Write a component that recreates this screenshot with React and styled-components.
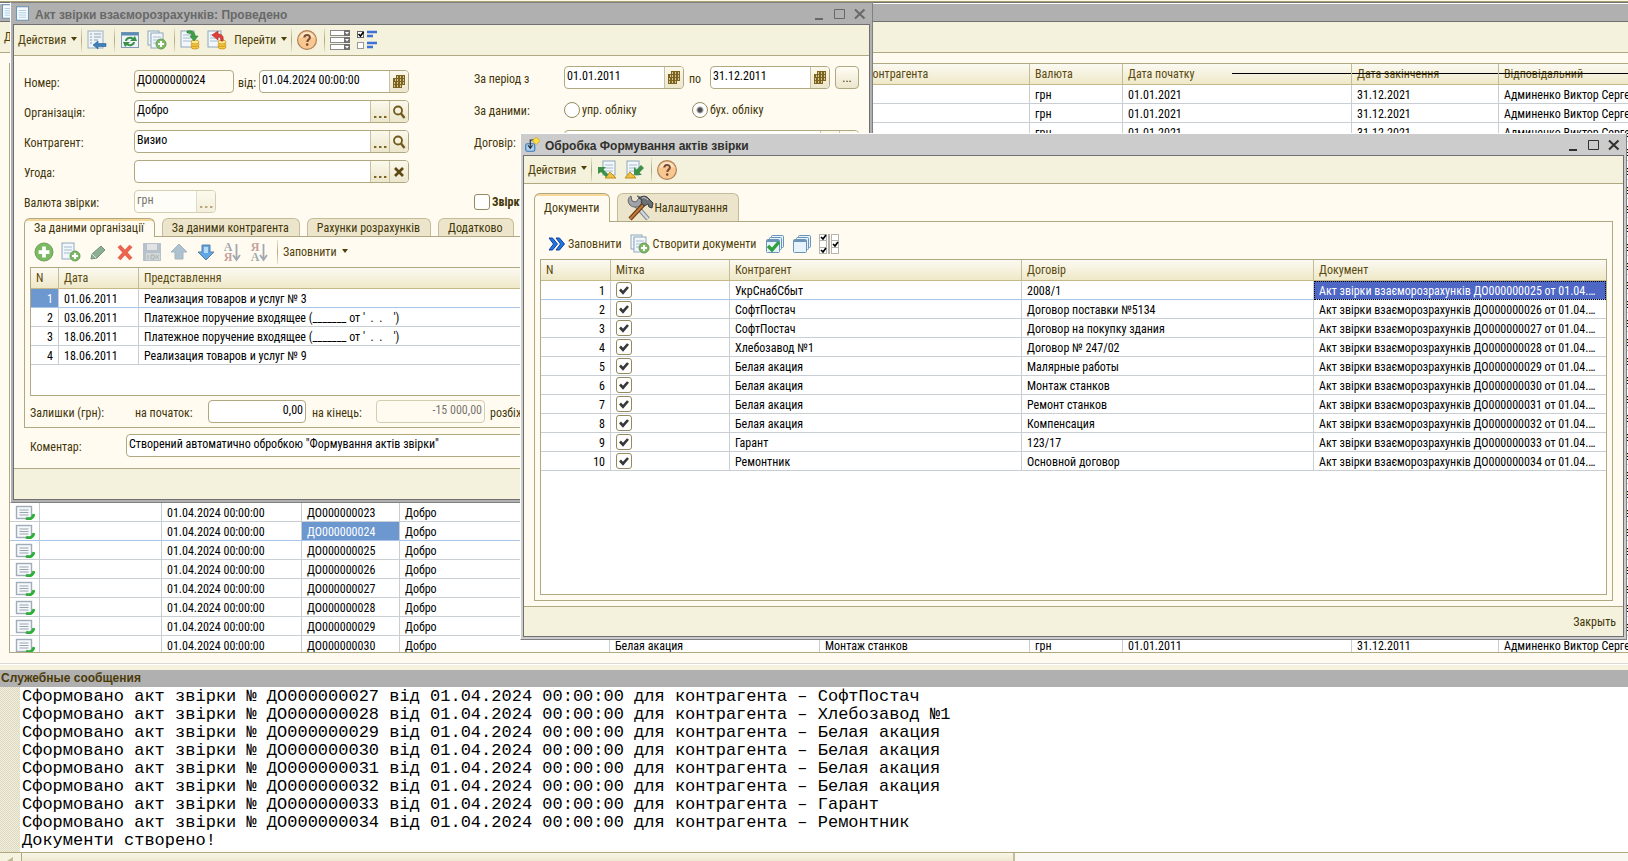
import React from "react";
import styled, { createGlobalStyle, css } from "styled-components";

const GlobalStyle = createGlobalStyle`
  * {
    box-sizing: border-box;
  }

  body {
    margin: 0;
    overflow: hidden;
    background: #fffbf0;
  }

  body, button, input, table {
    font-family: "Roboto Condensed", "Liberation Sans", sans-serif;
    font-size: 12px;
    color: #3f3508;
  }

  button {
    padding: 0;
    border: none;
    background: none;
    cursor: pointer;
  }

  svg {
    display: block;
    flex: none;
  }
`;

/* ---------- page ---------- */

const Page = styled.div`
  height: 100vh;
  display: flex;
  flex-direction: column;
`;

const Desktop = styled.main`
  position: relative;
  flex: 1;
  min-height: 0;
  display: flex;
  flex-direction: column;
  overflow: hidden;
  border-top: 1px solid #fbf9e8;
`;

const ListTitle = styled.div`
  flex: none;
  height: 21px;
  padding-left: 1px;
  border-top: 1px solid #a8a070;
  border-bottom: 1px solid #707070;
  background: linear-gradient(#707070 1px, #fff 1px, #fff 2px, #b0b0b0 2px);
  display: flex;
  align-items: center;
`;

const ListBox = styled.div`
  flex: 1;
  min-height: 0;
  margin: 10px 0 10px 9px;
  border: 1px solid #b0a880;
  border-right: none;
  background: #fff;
  overflow: hidden;
`;

/* ---------- toolbars ---------- */

const Toolbar = styled.div`
  flex: none;
  height: ${(p) => p.$height || 31}px;
  display: flex;
  align-items: center;
  ${(p) =>
    !p.$plain &&
    css`
      background: #f4f1dc;
      border-bottom: 1px solid #b0a880;
    `}
`;

const Separator = styled.span`
  width: 1px;
  height: 24px;
  margin: 0 1px 0 4px;
  background: linear-gradient(#e8e4cc, #b0a880, #e8e4cc);
`;

const MenuButton = styled.button`
  height: 24px;
  padding-left: 4px;
  display: flex;
  align-items: center;
  gap: 5px;
  color: #4f3f08;
  white-space: nowrap;

  &::after {
    content: "";
    margin-bottom: 3px;
    border: 3px solid transparent;
    border-top: 4px solid #4f3f08;
    border-bottom: none;
  }
`;

const IconButton = styled.button`
  width: 27px;
  height: 24px;
  display: flex;
  align-items: center;
  justify-content: center;
  opacity: ${(p) => (p.$faded ? 0.5 : 1)};
`;

const TextButton = styled.button`
  height: 24px;
  padding: 0 0 0 8px;
  display: flex;
  align-items: center;
  gap: 3px;
  color: #4f3f08;
  white-space: nowrap;
`;

const FillToolbar = styled(Toolbar)`
  padding-top: 6px;
`;

const FlagButtons = styled.div`
  margin-left: 5px;
  display: flex;
`;

/* ---------- windows ---------- */

const Window = styled.section`
  position: absolute;
  display: flex;
  flex-direction: column;
  padding: 0 2px 2px;
  border: 1px solid #808080;
  border-left-color: #fff;
  background: ${(p) => (p.$active ? "#cccccc" : "#b0b0b0")};
  color: ${(p) => (p.$active ? "#30302c" : "#686868")};
`;

const ActWindow = styled(Window)`
  left: 10px;
  top: 1px;
  width: 863px;
`;

const ProcessingWindow = styled(Window)`
  left: 520px;
  right: 1px;
  top: 132px;
  border-top-color: #fff;
`;

const TitleBar = styled.header`
  height: 21px;
  padding-left: 2px;
  display: flex;
  align-items: center;
  gap: 5px;
`;

const Title = styled.h1`
  flex: 1;
  margin: 2px 0 0;
  font: bold 12px "Liberation Sans", sans-serif;
  color: inherit;
`;

const ControlsRow = styled.div`
  display: flex;
`;

const WindowButton = styled.button`
  width: 20px;
  height: 20px;
  display: flex;
  align-items: center;
  justify-content: center;
  color: inherit;
`;

const Client = styled.div`
  border: 1px solid #707070;
  background: #fffbf0;
  color: #3f3508;
`;

const ActBody = styled.div`
  padding: 10px 10px 11px;
`;

const ProcessingBody = styled.div`
  padding: 9px 10px 5px;
`;

const Footer = styled.footer`
  height: ${(p) => p.$height}px;
  padding: 0 7px;
  border-top: 1px solid #b0a880;
  background: #f4f1dc;
  display: flex;
  align-items: center;
  justify-content: flex-end;
`;

/* ---------- form ---------- */

const FormGrid = styled.div`
  display: grid;
  grid-template-columns: 450px 1fr;
`;

const LeftColumn = styled.div`
  padding-top: 4px;
  display: flex;
  flex-direction: column;
  gap: 7px;
`;

const RightColumn = styled.div`
  display: flex;
  flex-direction: column;
  gap: 9px;
`;

const Line = styled.div`
  width: ${(p) => p.$width || "auto"};
  height: ${(p) => p.$height || 23}px;
  display: flex;
  align-items: center;
`;

const CommentLine = styled(Line)`
  margin-top: 6px;
  padding-left: 6px;
`;

const Label = styled.label`
  flex: none;
  width: ${(p) => p.$width}px;
  padding: 2px 0 0 ${(p) => p.$indent || 0}px;
  white-space: nowrap;
`;

const Field = styled.div`
  flex: ${(p) => (p.$width ? "none" : 1)};
  width: ${(p) => p.$width || 0}px;
  height: 23px;
  display: flex;
  overflow: hidden;
  border: 1px solid #b0a880;
  border-radius: 4px;
  background: ${(p) => (p.$muted ? "#fffbf0" : "#fff")};
  opacity: ${(p) => (p.$disabled ? 0.55 : 1)};

  input {
    flex: 1;
    min-width: 0;
    padding: 0 2px 4px;
    border: none;
    outline: none;
    background: none;
    color: #000;
    text-align: ${(p) => p.$align || "left"};
  }
`;

const FieldButton = styled.button`
  width: 19px;
  border-left: 1px solid #c8c2a0;
  background: linear-gradient(#fbf9ec, #ece6cc);
  display: flex;
  align-items: center;
  justify-content: center;
`;

const PeriodButton = styled.button`
  width: 24px;
  height: 23px;
  margin-left: 5px;
  border: 1px solid #b0a880;
  border-radius: 4px;
  background: linear-gradient(#fffdf4, #ece6cc);
`;

const Choice = styled.label`
  width: 128px;
  display: flex;
  align-items: center;
  gap: 2px;
`;

const BoldChoice = styled.label`
  height: 24px;
  margin-top: 28px;
  display: flex;
  align-items: center;
  gap: 2px;
  font-weight: bold;
`;

const Radio = styled.input`
  appearance: none;
  width: 16px;
  height: 16px;
  margin: 0;
  border: 1px solid #948a60;
  border-radius: 50%;
  background: #fff;

  &:checked {
    background: radial-gradient(#444 0, #555 2px, #fff 4px);
  }
`;

const tick =
  "url(\"data:image/svg+xml,%3Csvg xmlns='http://www.w3.org/2000/svg' viewBox='0 0 14 14'%3E%3Cpath d='M3 6.5l3 3.2L11 4' fill='none' stroke='%23383838' stroke-width='2.6'/%3E%3C/svg%3E\")";

const Checkbox = styled.input`
  appearance: none;
  flex: none;
  display: block;
  width: 16px;
  height: 16px;
  margin: 0;
  border: 1px solid #948a60;
  border-radius: 3px;
  background: #fff;

  &:checked {
    background: #fff ${tick};
  }
`;

/* ---------- tabs ---------- */

const Tabs = styled.div`
  display: flex;
  gap: 7px;
  margin-top: ${(p) => p.$offset || 0}px;
`;

const Tab = styled.button`
  position: relative;
  height: ${(p) => p.$height}px;
  padding: 0 10px 0 9px;
  display: flex;
  align-items: center;
  border: 1px solid #c4bc98;
  border-bottom: none;
  border-radius: 6px 6px 0 0;
  background: #ece5cb;
  white-space: nowrap;

  ${(p) =>
    p.$selected &&
    css`
      margin-bottom: -1px;
      border-color: #b0a880;
      background: linear-gradient(#f8d898 2px, #fffbf0 2px);
    `}
`;

const Panel = styled.div`
  padding: 0 5px ${(p) => p.$bottom || 0}px;
  border: 1px solid #b0a880;
`;

/* ---------- tables ---------- */

const TableBox = styled.div`
  min-height: ${(p) => p.$height}px;
  border: 1px solid #b0a880;
  background: #fff;
`;

const Table = styled.table`
  width: 100%;
  table-layout: fixed;
  border-collapse: separate;
  border-spacing: 0;
`;

const Th = styled.th`
  position: relative;
  height: 21px;
  padding: 0 5px;
  border-right: 1px solid #c4bc98;
  border-bottom: 1px solid #c4b888;
  background: linear-gradient(#fbfaf2, #efe8c8);
  color: #5a4a10;
  font-weight: normal;
  text-align: left;
  white-space: nowrap;
  overflow: hidden;

  &:last-child {
    border-right: none;
  }

  ${(p) =>
    p.$strike !== undefined &&
    css`
      &::after {
        content: "";
        position: absolute;
        left: ${p.$strike}px;
        right: -1px;
        top: 9px;
        height: 1px;
        background: #000;
      }
    `}
`;

const Tr = styled.tr`
  td {
    border-bottom-color: ${(p) => (p.$current ? "#a8c4e8" : "#c8ced2")};
  }
`;

const Td = styled.td`
  height: 19px;
  padding: ${(p) => (p.$graphic ? 0 : 2)}px 5px 0;
  border-right: 1px solid #c8ced2;
  border-bottom: 1px solid #c8ced2;
  color: #000;
  line-height: 16px;
  text-align: ${(p) => p.$align || "left"};
  white-space: ${(p) => (p.$pre ? "pre" : "nowrap")};
  overflow: hidden;

  &:last-child {
    border-right: none;
  }

  ${(p) =>
    p.$selected &&
    css`
      background: #6d97cf;
      color: #fff;
    `}

  ${(p) =>
    p.$focused &&
    css`
      background: #4f67c4;
      color: #fff;
      outline: 1px dotted #000;
      outline-offset: -1px;
    `}
`;

/* ---------- messages ---------- */

const Messages = styled.section`
  flex: none;
  border-top: 1px solid #d8d8d8;
  background: linear-gradient(#fff 1px, #f4f1dc 1px);
  padding-top: 6px;
`;

const MessagesTitle = styled.h2`
  height: 17px;
  margin: 0;
  padding-left: 1px;
  background: #b0b0b0;
  color: #4a3a08;
  font: bold 12px/17px "Liberation Sans", sans-serif;
`;

const LogArea = styled.div`
  padding-left: 20px;
  background: repeating-conic-gradient(#dcd8bc 0 25%, #f2efe0 0 50%) 0 0 / 2px 2px;
`;

const Log = styled.div`
  height: 165px;
  padding: 1px 0 0 2px;
  background: #fff;
  color: #000;
  font: 17px/18px "Liberation Mono", monospace;
  white-space: pre;
  overflow: hidden;
`;

const ScrollBar = styled.div`
  height: 9px;
  display: flex;
  border-top: 1px solid #b0a880;
  background: #faf8f2;
  overflow: hidden;
`;

const ScrollArrow = styled.span`
  width: 22px;
  border-right: 1px solid #b0a880;
  background: #f6f2e0;
  display: flex;
  align-items: flex-end;
  justify-content: center;
`;

const ScrollThumb = styled.span`
  width: 61%;
  border-right: 2px solid #c4bc98;
  background: linear-gradient(#f8f6ea, #f0e9d0);
`;

/* ---------- icons ---------- */

const Svg = ({ size = 20, children }) => (
  <svg width={size} height={size} viewBox="0 0 20 20" aria-hidden="true">
    {children}
  </svg>
);

const Sheet = ({ x = 1, y = 1, w = 13, h = 16 }) => (
  <g>
    <rect x={x} y={y} width={w} height={h} fill="#f2f7fb" stroke="#8fa8bc" />
    <path
      d={`M${x + 2} ${y + 4}h${w - 4}M${x + 2} ${y + 7}h${w - 4}M${x + 2} ${y + 10}h${w - 4}`}
      stroke="#a4bccd"
    />
  </g>
);

const Coins = () => (
  <g fill="#f6c840" stroke="#c08a18" strokeWidth=".7">
    <ellipse cx="15" cy="17" rx="4" ry="2" />
    <ellipse cx="15" cy="14.5" rx="4" ry="2" />
    <ellipse cx="15" cy="12" rx="4" ry="2" fill="#fde98a" />
  </g>
);

const PlusBall = ({ cx = 14, cy = 14, r = 5 }) => (
  <g>
    <circle cx={cx} cy={cy} r={r} fill="#7cba62" stroke="#6c9c60" />
    <path
      d={`M${cx - r * 0.6} ${cy}h${r * 1.2}M${cx} ${cy - r * 0.6}v${r * 1.2}`}
      stroke="#fff"
      strokeWidth={r / 2.4}
    />
  </g>
);

const DocIcon = () => (
  <Svg size={15}>
    <rect x="2" y="1" width="16" height="18" fill="#f4faff" stroke="#6f94b4" strokeWidth="1.4" />
    <path d="M5 6h10M5 9h10M5 12h10M5 15h10" stroke="#9cc0dc" />
  </Svg>
);

const ProcessingIcon = () => (
  <Svg size={15}>
    <rect x="1" y="9" width="12" height="10" rx="2" fill="#a8d0f0" stroke="#3c78b0" strokeWidth="1.5" />
    <path d="M13 4H7v10M4 11l3 4 3-4" fill="none" stroke="#222" strokeWidth="1.4" />
    <path d="M15 0l5 5-5 5-5-5z" fill="#ffe040" stroke="#c8a020" />
  </Svg>
);

const RowIcon = () => (
  <svg width="20" height="16" viewBox="0 0 20 16" aria-hidden="true">
    <rect x="1.5" y="2.5" width="15" height="12" fill="#f6f8fa" stroke="#a0adb8" strokeWidth="1.4" />
    <path d="M4.5 6h9M4.5 8.5h9M4.5 11h9" stroke="#98a4b0" />
    <path d="M11 14c4 2 7 0 8-4" fill="none" stroke="#2fae3c" strokeWidth="3" />
  </svg>
);

const WriteIcon = () => (
  <Svg>
    <rect x="1" y="1" width="15" height="17" fill="#eef3f7" stroke="#9db0c0" />
    <path d="M3 4h2M7 4h7M3 7h2M7 7h7M3 10h2M7 10h4M3 13h2" stroke="#8ea4b8" />
    <path d="M6 15l5-4v2.5h8v3h-8V19z" fill="#3f7fb8" stroke="#28629a" strokeWidth=".6" />
  </Svg>
);

const RefreshIcon = () => (
  <Svg>
    <rect x="1.5" y="2.5" width="17" height="15" fill="#eef4f8" stroke="#7f9cb4" />
    <rect x="1.5" y="2.5" width="17" height="3" fill="#5f8cb4" />
    <path d="M6 11a4 3.4 0 0 1 7-2" fill="none" stroke="#3c9048" strokeWidth="2" />
    <path d="M14 12a4 3.4 0 0 1-7 2" fill="none" stroke="#3c9048" strokeWidth="2" />
    <path d="M10 11h7l-2-5zM10 12H3l2 5z" fill="#3c9048" />
  </Svg>
);

const CopyPlusIcon = () => (
  <Svg>
    <Sheet x={1} y={1} w={11} h={14} />
    <Sheet x={4} y={3} w={12} h={15} />
    <PlusBall cx={14} cy={14} r={5} />
  </Svg>
);

const AddCopyIcon = () => (
  <Svg>
    <Sheet x={1} y={1} w={12} h={16} />
    <PlusBall cx={14} cy={14} r={5} />
  </Svg>
);

const PostIcon = () => (
  <Svg>
    <Sheet />
    <Coins />
    <path d="M7 1c5-1 8 1 8 5h3l-4 5-4-5h2c0-2-2-3-5-3z" fill="#3fa048" stroke="#287830" strokeWidth=".6" />
  </Svg>
);

const UnpostIcon = () => (
  <Svg>
    <Sheet />
    <Coins />
    <path d="M16 11c1-5-1-7-5-7V1L5 5l6 5V7c2 0 3 1 3 4z" fill="#e04038" stroke="#a82820" strokeWidth=".6" />
  </Svg>
);

const HelpIcon = () => (
  <svg width="22" height="22" viewBox="0 0 22 22" aria-hidden="true">
    <circle cx="11" cy="11" r="9.4" fill="#f8c890" stroke="#b08058" strokeWidth="1.2" />
    <path d="M4 9a7 6 0 0 1 14 0c-4-2-10-2-14 0z" fill="#fde6c4" />
    <path d="M8.3 8.6c0-3.6 5.6-3.4 5.6-.2 0 2-2.6 2.2-2.6 4.6" fill="none" stroke="#7a4a34" strokeWidth="2" />
    <circle cx="11.2" cy="15.6" r="1.3" fill="#7a4a34" />
  </svg>
);

const ListSettingsIcon = () => (
  <Svg>
    {[0, 7, 14].map((y) => (
      <g key={y}>
        <rect x=".5" y={y + 0.5} width="19" height="5" fill="#fff" stroke="#8a8a8a" />
        <rect x="14" y={y} width="6" height="6" fill="#707070" />
        <path d={`M15 ${y + 2}h4l-2 2.5z`} fill="#fff" />
      </g>
    ))}
  </Svg>
);

const FlagsIcon = () => (
  <Svg>
    <rect x=".5" y="1.5" width="6" height="6" fill="#fff" stroke="#666" />
    <path d="M1.5 4l2 2 3-4" fill="none" stroke="#000" strokeWidth="1.6" />
    <rect x=".5" y="12.5" width="6" height="6" fill="#fff" stroke="#999" />
    <path d="M10 2h10M10 6h6M10 13h10M10 17h6" stroke="#3f70d8" strokeWidth="2.4" />
  </Svg>
);

const AddIcon = () => (
  <Svg>
    <PlusBall cx={10} cy={10} r={9} />
  </Svg>
);

const PencilIcon = () => (
  <Svg>
    <path d="M3 17l1-5 9-8 4 4-8 8z" fill="#8cae94" stroke="#6f9478" />
    <path d="M4 12l4 4" stroke="#d8e8dc" />
  </Svg>
);

const DeleteIcon = () => (
  <Svg>
    <path d="M4 4l12 13M16 4L4 17" stroke="#ea6450" strokeWidth="4" />
  </Svg>
);

const SaveIcon = () => (
  <Svg>
    <path d="M1 1h18v18H1z" fill="#7088a8" />
    <path d="M5 2h10v6H5z" fill="#c4ced8" />
    <path d="M4 11h14v7H4z" fill="#a8b4c0" />
    <path d="M6 13v4M9 13h3v4H9zM14 13v4M17 13l-2 2 2 2" stroke="#586878" fill="none" />
  </Svg>
);

const UpIcon = () => (
  <Svg>
    <path d="M10 2l8 8h-4v7H6v-7H2z" fill="#5f88b0" stroke="#4c7094" />
  </Svg>
);

const DownIcon = () => (
  <Svg>
    <path d="M10 18l8-8h-4V3H6v7H2z" fill="#5fa8e8" stroke="#5c7c9c" />
    <path d="M8 5h4v6H8z" fill="#b4dcfa" />
  </Svg>
);

const SortLetters = styled.span`
  display: flex;
  flex-direction: column;
  font: bold 12px/10px "Liberation Serif", serif;
  color: #485870;

  span:${(p) => (p.$desc ? "first-child" : "last-child")} {
    color: #8c4848;
  }
`;

const SortIcon = ({ desc }) => (
  <>
    <SortLetters $desc={desc}>
      <span>{desc ? "Я" : "А"}</span>
      <span>{desc ? "А" : "Я"}</span>
    </SortLetters>
    <svg width="9" height="20" viewBox="0 0 9 20" aria-hidden="true">
      <path d="M4.5 2v15M1 13l3.5 5L8 13" fill="none" stroke="#485870" strokeWidth="1.8" />
    </svg>
  </>
);

const CalendarIcon = () => (
  <svg width="14" height="15" viewBox="0 0 14 15" aria-hidden="true">
    <path d="M4 1h9v10h-3v3H1V4h3z" fill="#7c6420" />
    <path
      d="M5 3h1M8 3h1M11 3h1M3 6h1M5 6h1M8 6h1M11 6h1M2 9h1M5 9h1M8 9h1M11 9h1M2 12h1M5 12h1M8 12h1"
      stroke="#f0e8c0"
      strokeWidth="1.6"
    />
  </svg>
);

const SearchIcon = () => (
  <svg width="14" height="14" viewBox="0 0 14 14" aria-hidden="true">
    <circle cx="6" cy="5.5" r="4" fill="none" stroke="#6f5a1c" strokeWidth="1.8" />
    <path d="M9 8.5l3.5 4.5" stroke="#6f5a1c" strokeWidth="2.4" />
  </svg>
);

const DotsIcon = () => (
  <svg width="14" height="14" viewBox="0 0 14 14" aria-hidden="true">
    <path d="M1 12h2.4M6 12h2.4M11 12h2.4" stroke="#7c6420" strokeWidth="2.2" />
  </svg>
);

const ClearIcon = () => (
  <svg width="12" height="12" viewBox="0 0 12 12" aria-hidden="true">
    <path d="M2 2l8 8M10 2l-8 8" stroke="#5c4810" strokeWidth="2.6" />
  </svg>
);

const LoadIcon = () => (
  <Svg>
    <Sheet x={6} y={1} w={12} h={14} />
    <path d="M8 18l5-6 6 6z" fill="#f0c040" stroke="#c09020" />
    <path d="M1 7h8l-2.5 2.5 5 5-2.5 2.5-5-5L1 14z" fill="#3c9048" />
  </Svg>
);

const StoreIcon = () => (
  <Svg>
    <Sheet x={3} y={1} w={12} h={14} />
    <path d="M1 18l5-6 6 6z" fill="#f0c040" stroke="#c09020" />
    <path d="M10 15V7l2.5 2.5L17 5l3 3-4.5 4.5L18 15z" fill="#3c9048" />
  </Svg>
);

const ChevronsIcon = () => (
  <svg width="17" height="16" viewBox="0 0 17 16" aria-hidden="true">
    <path
      d="M1 2h3.5l5 6-5 6H1l4.5-6zM8 2h3.5l5 6-5 6H8l4.5-6z"
      fill="#1f78e0"
      stroke="#0c3fa0"
    />
  </svg>
);

const ToolsIcon = () => (
  <svg width="27" height="26" viewBox="0 0 27 26" aria-hidden="true">
    <path d="M7 8l14 16" stroke="#888c90" strokeWidth="4.6" />
    <path d="M7 8l14 16" stroke="#d4d8dc" strokeWidth="2.4" />
    <path d="M4 1l1 5 4 1 3-4-2-2c4 0 6 4 4 8s-8 4-11 1-2-8 1-9z" fill="#a0a4a8" stroke="#606468" />
    <path d="M17 9L3 24" stroke="#6c3c14" strokeWidth="4.4" />
    <path d="M17 9L3 24" stroke="#c07c38" strokeWidth="2" />
    <path d="M12 3c4-3 8-2 10 1l4 4-1 5-3-1-1-3-4 2-3-4 1-2z" fill="#6c7074" stroke="#383c40" />
    <path d="M15 3c2-1 4 0 6 2" stroke="#c8ccd0" fill="none" />
  </svg>
);

const Stack = () => (
  <g fill="#e6f2fc" stroke="#6c94b8">
    <rect x="6.5" y="1.5" width="12" height="12" rx="1" />
    <rect x="4.5" y="3.5" width="12" height="12" rx="1" />
    <rect x="1.5" y="5.5" width="13" height="13" rx="1" />
    <path d="M2 7h12" strokeWidth="2" />
  </g>
);

const CheckAllIcon = () => (
  <Svg>
    <Stack />
    <path d="M3 12l4 4 7-8" fill="none" stroke="#2fa03c" strokeWidth="3.4" />
  </Svg>
);

const UncheckAllIcon = () => (
  <Svg>
    <Stack />
  </Svg>
);

const InvertIcon = () => (
  <Svg>
    <path d="M0 0h8v20H0zM12 0h8v20h-8z" fill="#b4b4b0" />
    <path d="M1 1h6v5H1zM1 7h6v6H1zM1 14h6v5H1zM13 1h6v5h-6zM13 7h6v6h-6zM13 14h6v5h-6z" fill="#fff" />
    <path d="M2 3l2 2 3-4M2 16l2 2 3-4M14 10l2 2 3-4" fill="none" stroke="#000" strokeWidth="1.7" />
    <path d="M10 0v20" stroke="#666" />
  </Svg>
);

const ArrowLeftIcon = () => (
  <svg width="8" height="4" viewBox="0 0 8 4" aria-hidden="true">
    <path d="M0 4l6-4v4z" fill="#c0b890" />
  </svg>
);

const WindowControls = () => (
  <ControlsRow>
    <WindowButton aria-label="Свернуть">
      <svg width="12" height="12" viewBox="0 0 12 12">
        <path d="M1 11h8" stroke="currentColor" strokeWidth="2" />
      </svg>
    </WindowButton>
    <WindowButton aria-label="Развернуть">
      <svg width="12" height="12" viewBox="0 0 12 12">
        <path d="M.5 1.5h10v9H.5z" fill="none" stroke="currentColor" />
      </svg>
    </WindowButton>
    <WindowButton aria-label="Закрыть окно">
      <svg width="12" height="12" viewBox="0 0 12 12">
        <path d="M1 1.5l9.5 9M10.5 1.5l-9.5 9" stroke="currentColor" strokeWidth="2" />
      </svg>
    </WindowButton>
  </ControlsRow>
);

/* ---------- data ---------- */

const listColumns = [30, 122, 140, 98, 210, 210, 210, 93, 229, 147, null];

const listRows = Array.from({ length: 30 }, (_, i) => ({
  number: `ДО0000000${String(i + 1).padStart(2, "0")}`,
  partner: i === 29 ? "Белая акация" : "",
  contract: i === 29 ? "Монтаж станков" : "",
  year: i < 22 ? 2021 : 2011,
}));

const actRows = [
  ["01.06.2011", "Реализация товаров и услуг № 3"],
  ["03.06.2011", "Платежное поручение входящее (_______ от '  .  .    ')"],
  ["18.06.2011", "Платежное поручение входящее (_______ от '  .  .    ')"],
  ["18.06.2011", "Реализация товаров и услуг № 9"],
];

const documents = [
  ["УкрСнабСбыт", "2008/1"],
  ["СофтПостач", "Договор поставки №5134"],
  ["СофтПостач", "Договор на покупку здания"],
  ["Хлебозавод №1", "Договор № 247/02"],
  ["Белая акация", "Малярные работы"],
  ["Белая акация", "Монтаж станков"],
  ["Белая акация", "Ремонт станков"],
  ["Белая акация", "Компенсация"],
  ["Гарант", "123/17"],
  ["Ремонтник", "Основной договор"],
];

const messages = documents
  .slice(2)
  .map(
    ([partner], i) =>
      `Сформовано акт звірки № ДО0000000${27 + i} від 01.04.2024 00:00:00 для контрагента – ${partner}`
  )
  .concat("Документи створено!");

/* ---------- parts ---------- */

const LookupField = ({ id, value, clear }) => (
  <Field>
    <input id={id} defaultValue={value} />
    <FieldButton aria-label="Выбрать">
      <DotsIcon />
    </FieldButton>
    <FieldButton aria-label={clear ? "Очистить" : "Открыть"}>
      {clear ? <ClearIcon /> : <SearchIcon />}
    </FieldButton>
  </Field>
);

const DateField = ({ id, value, width }) => (
  <Field $width={width}>
    <input id={id} defaultValue={value} />
    <FieldButton aria-label="Календарь">
      <CalendarIcon />
    </FieldButton>
  </Field>
);

const DocumentList = () => (
  <>
    <ListTitle>
      <DocIcon />
    </ListTitle>
    <Toolbar>
      <MenuButton>Действия</MenuButton>
    </Toolbar>
    <ListBox>
      <Table>
        <colgroup>
          {listColumns.map((width, i) => (
            <col key={i} width={width || undefined} />
          ))}
        </colgroup>
        <thead>
          <tr>
            <Th />
            <Th />
            <Th>Дата</Th>
            <Th>Номер</Th>
            <Th>Організація</Th>
            <Th>Контрагент</Th>
            <Th>Договір контрагента</Th>
            <Th>Валюта</Th>
            <Th $strike={109}>Дата початку</Th>
            <Th $strike={0}>Дата закінчення</Th>
            <Th $strike={0}>Відповідальний</Th>
          </tr>
        </thead>
        <tbody>
          {listRows.map((row, i) => (
            <Tr key={row.number} $current={i === 23}>
              <Td $graphic>
                <RowIcon />
              </Td>
              <Td />
              <Td>01.04.2024 00:00:00</Td>
              <Td $selected={i === 23}>{row.number}</Td>
              <Td>Добро</Td>
              <Td>{row.partner}</Td>
              <Td>{row.contract}</Td>
              <Td>грн</Td>
              <Td>01.01.{row.year}</Td>
              <Td>31.12.{row.year}</Td>
              <Td>Админенко Виктор Сергеевич</Td>
            </Tr>
          ))}
        </tbody>
      </Table>
    </ListBox>
  </>
);

const ActForm = () => (
  <ActWindow>
    <TitleBar>
      <DocIcon />
      <Title>Акт звірки взаєморозрахунків: Проведено</Title>
      <WindowControls />
    </TitleBar>
    <Client>
      <Toolbar>
        <MenuButton>Действия</MenuButton>
        <Separator />
        <IconButton aria-label="Записать"><WriteIcon /></IconButton>
        <Separator />
        <IconButton aria-label="Обновить"><RefreshIcon /></IconButton>
        <IconButton aria-label="Скопировать"><CopyPlusIcon /></IconButton>
        <Separator />
        <IconButton aria-label="Провести"><PostIcon /></IconButton>
        <IconButton aria-label="Отмена проведения"><UnpostIcon /></IconButton>
        <MenuButton>Перейти</MenuButton>
        <Separator />
        <IconButton aria-label="Справка"><HelpIcon /></IconButton>
        <Separator />
        <IconButton aria-label="Настройка списка"><ListSettingsIcon /></IconButton>
        <IconButton aria-label="Настройка флажков"><FlagsIcon /></IconButton>
      </Toolbar>
      <ActBody>
        <FormGrid>
          <LeftColumn>
            <Line $width="385px">
              <Label htmlFor="number" $width={110}>Номер:</Label>
              <Field $width={100} $muted>
                <input id="number" defaultValue="ДО000000024" />
              </Field>
              <Label htmlFor="date" $width={25} $indent={4}>від:</Label>
              <DateField id="date" value="01.04.2024 00:00:00" width={150} />
            </Line>
            <Line $width="385px">
              <Label htmlFor="company" $width={110}>Організація:</Label>
              <LookupField id="company" value="Добро" />
            </Line>
            <Line $width="385px">
              <Label htmlFor="partner" $width={110}>Контрагент:</Label>
              <LookupField id="partner" value="Визио" />
            </Line>
            <Line $width="385px">
              <Label htmlFor="deal" $width={110}>Угода:</Label>
              <LookupField id="deal" value="" clear />
            </Line>
            <Line $width="385px">
              <Label htmlFor="currency" $width={110}>Валюта звірки:</Label>
              <Field $width={82} $disabled>
                <input id="currency" defaultValue="грн" disabled />
                <FieldButton aria-label="Выбрать валюту" disabled>
                  <DotsIcon />
                </FieldButton>
              </Field>
            </Line>
          </LeftColumn>
          <RightColumn>
            <Line>
              <Label htmlFor="from" $width={90}>За період з</Label>
              <DateField id="from" value="01.01.2011" width={120} />
              <Label htmlFor="to" $width={26} $indent={5}>по</Label>
              <DateField id="to" value="31.12.2011" width={120} />
              <PeriodButton aria-label="Период">...</PeriodButton>
            </Line>
            <Line>
              <Label as="span" $width={90}>За даними:</Label>
              <Choice>
                <Radio type="radio" name="source" />
                упр. обліку
              </Choice>
              <Choice>
                <Radio type="radio" name="source" defaultChecked />
                бух. обліку
              </Choice>
            </Line>
            <Line>
              <Label htmlFor="contract" $width={90}>Договір:</Label>
              <LookupField id="contract" value="" />
            </Line>
            <BoldChoice>
              <Checkbox type="checkbox" />
              Звірку узгоджено
            </BoldChoice>
          </RightColumn>
        </FormGrid>
        <Tabs $offset={4}>
          <Tab $height={19} $selected>За даними організації</Tab>
          <Tab $height={18}>За даними контрагента</Tab>
          <Tab $height={18}>Рахунки розрахунків</Tab>
          <Tab $height={18}>Додатково</Tab>
        </Tabs>
        <Panel>
          <Toolbar $plain $height={30}>
            <IconButton aria-label="Добавить"><AddIcon /></IconButton>
            <IconButton aria-label="Добавить копированием"><AddCopyIcon /></IconButton>
            <IconButton aria-label="Изменить"><PencilIcon /></IconButton>
            <IconButton aria-label="Удалить"><DeleteIcon /></IconButton>
            <IconButton aria-label="Сохранить" $faded><SaveIcon /></IconButton>
            <IconButton aria-label="Вверх" $faded><UpIcon /></IconButton>
            <IconButton aria-label="Вниз"><DownIcon /></IconButton>
            <IconButton aria-label="По возрастанию" $faded><SortIcon /></IconButton>
            <IconButton aria-label="По убыванию" $faded><SortIcon desc /></IconButton>
            <Separator />
            <MenuButton>Заповнити</MenuButton>
          </Toolbar>
          <TableBox $height={129}>
            <Table>
              <colgroup>
                <col width="28" />
                <col width="80" />
                <col />
              </colgroup>
              <thead>
                <tr>
                  <Th>N</Th>
                  <Th>Дата</Th>
                  <Th>Представлення</Th>
                </tr>
              </thead>
              <tbody>
                {actRows.map(([date, text], i) => (
                  <Tr key={i} $current={i === 0}>
                    <Td $align="right" $selected={i === 0}>{i + 1}</Td>
                    <Td>{date}</Td>
                    <Td $pre>{text}</Td>
                  </Tr>
                ))}
              </tbody>
            </Table>
          </TableBox>
          <Line $height={31}>
            <Label as="span" $width={105}>Залишки (грн):</Label>
            <Label htmlFor="opening" $width={73}>на початок:</Label>
            <Field $width={98} $align="right">
              <input id="opening" defaultValue="0,00" />
            </Field>
            <Label htmlFor="closing" $width={70} $indent={6}>на кінець:</Label>
            <Field $width={109} $align="right" $muted $disabled>
              <input id="closing" defaultValue="-15 000,00" disabled />
            </Field>
            <Label as="span" $width={70} $indent={5}>розбіжність:</Label>
          </Line>
        </Panel>
        <CommentLine>
          <Label htmlFor="comment" $width={96}>Коментар:</Label>
          <Field>
            <input
              id="comment"
              defaultValue={'Створений автоматично обробкою "Формування актів звірки"'}
            />
          </Field>
        </CommentLine>
      </ActBody>
      <Footer $height={31} />
    </Client>
  </ActWindow>
);

const Processing = () => (
  <ProcessingWindow $active>
    <TitleBar>
      <ProcessingIcon />
      <Title>Обробка Формування актів звірки</Title>
      <WindowControls />
    </TitleBar>
    <Client>
      <Toolbar $height={28}>
        <MenuButton>Действия</MenuButton>
        <Separator />
        <IconButton aria-label="Восстановить значения"><LoadIcon /></IconButton>
        <IconButton aria-label="Сохранить значения"><StoreIcon /></IconButton>
        <Separator />
        <IconButton aria-label="Справка"><HelpIcon /></IconButton>
      </Toolbar>
      <ProcessingBody>
        <Tabs>
          <Tab $height={29} $selected>Документи</Tab>
          <Tab $height={28}>
            <ToolsIcon />
            Налаштування
          </Tab>
        </Tabs>
        <Panel $bottom={5}>
          <FillToolbar $plain $height={37}>
            <TextButton>
              <ChevronsIcon />
              Заповнити
            </TextButton>
            <TextButton>
              <CopyPlusIcon />
              Створити документи
            </TextButton>
            <FlagButtons>
              <IconButton aria-label="Отметить все"><CheckAllIcon /></IconButton>
              <IconButton aria-label="Снять отметки"><UncheckAllIcon /></IconButton>
              <IconButton aria-label="Инвертировать"><InvertIcon /></IconButton>
            </FlagButtons>
          </FillToolbar>
          <TableBox $height={336}>
            <Table>
              <colgroup>
                <col width="70" />
                <col width="119" />
                <col />
                <col />
                <col />
              </colgroup>
              <thead>
                <tr>
                  <Th>N</Th>
                  <Th>Мітка</Th>
                  <Th>Контрагент</Th>
                  <Th>Договір</Th>
                  <Th>Документ</Th>
                </tr>
              </thead>
              <tbody>
                {documents.map(([partner, contract], i) => (
                  <Tr key={i} $current={i === 0}>
                    <Td $align="right">{i + 1}</Td>
                    <Td $graphic>
                      <Checkbox type="checkbox" defaultChecked aria-label={`Мітка ${i + 1}`} />
                    </Td>
                    <Td>{partner}</Td>
                    <Td>{contract}</Td>
                    <Td $focused={i === 0}>
                      Акт звірки взаєморозрахунків ДО0000000{25 + i} от 01.04.…
                    </Td>
                  </Tr>
                ))}
              </tbody>
            </Table>
          </TableBox>
        </Panel>
      </ProcessingBody>
      <Footer $height={30}>
        <button>Закрыть</button>
      </Footer>
    </Client>
  </ProcessingWindow>
);

const App = () => {
  return (
    <Page>
      <GlobalStyle />
      <Desktop>
        <DocumentList />
        <ActForm />
        <Processing />
      </Desktop>
      <Messages>
        <MessagesTitle>Служебные сообщения</MessagesTitle>
        <LogArea>
          <Log>{messages.join("\n")}</Log>
        </LogArea>
        <ScrollBar>
          <ScrollArrow>
            <ArrowLeftIcon />
          </ScrollArrow>
          <ScrollThumb />
        </ScrollBar>
      </Messages>
    </Page>
  );
};

export default App;
